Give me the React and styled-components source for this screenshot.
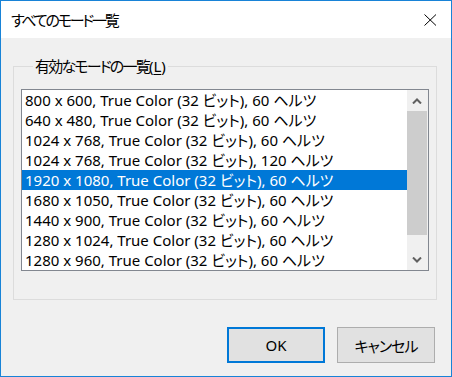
import React from "react";
import styled, { createGlobalStyle } from "styled-components";

const Global = createGlobalStyle`
  html, body { margin: 0; padding: 0; background: #f0f0f0; }
  * { box-sizing: border-box; }
`;

const FONT = `"Noto Sans", "Noto Sans CJK JP", sans-serif`;

const Window = styled.div`
  width: 452px;
  height: 377px;
  border: 1px solid #1883d7;
  display: flex;
  flex-direction: column;
  font-family: ${FONT};
  font-feature-settings: "palt";
  color: #000;
  background: #f0f0f0;
`;

const TitleBar = styled.div`
  height: 37px;
  background: #fff;
  display: flex;
  align-items: center;
  justify-content: space-between;
  padding-left: 10px;
  padding-right: 14px;
  flex-shrink: 0;
`;

const Title = styled.span`
  font-size: 15px;
  line-height: 20px;
  letter-spacing: -2.2px;
`;

const CloseIcon = styled.svg`
  display: block;
`;

const Body = styled.div`
  flex: 1;
  display: flex;
  flex-direction: column;
  padding: 18px 16px 13px 12px;
`;

const Group = styled.fieldset`
  margin: 0;
  padding: 0 0 0 7px;
  border: 1px solid #dcdcdc;
  width: 424px;
  height: 244px;
  min-width: 0;
`;

const Legend = styled.legend`
  font-size: 15px;
  line-height: 20px;
  padding: 0 2px;
  margin-left: 12px;
  color: #000;
`;

const Kana = styled.span`
  letter-spacing: -1.8px;
`;

const Under = styled.span`
  text-decoration: underline;
  text-underline-offset: 2px;
`;

const ListBox = styled.div`
  margin-top: 13px;
  width: 408px;
  height: 182px;
  border: 1px solid #828790;
  background: #fff;
  display: flex;
`;

const Rows = styled.div`
  flex: 1;
  display: flex;
  flex-direction: column;
`;

const Row = styled.div`
  height: 20px;
  line-height: 20px;
  padding-left: 3px;
  font-size: 15px;
  white-space: nowrap;
  background: ${(p) => (p.$selected ? "#0078d7" : "transparent")};
  color: ${(p) => (p.$selected ? "#fff" : "#000")};
`;

const ScrollBar = styled.div`
  width: 21px;
  background: #f0f0f0;
  display: flex;
  flex-direction: column;
`;

const ArrowButton = styled.div`
  height: 21px;
  display: flex;
  align-items: center;
  justify-content: center;
  padding-right: 1px;
`;

const Track = styled.div`
  flex: 1;
  display: flex;
  flex-direction: column;
  padding-right: 1px;
`;

const Thumb = styled.div`
  height: 124px;
  background: #cdcdcd;
`;

const Footer = styled.div`
  margin-top: 27px;
  display: flex;
  justify-content: flex-end;
  gap: 12px;
`;

const Button = styled.button`
  width: 98px;
  height: 36px;
  font-family: ${FONT};
  font-feature-settings: "palt";
  font-size: 15px;
  letter-spacing: ${(p) => (p.$default ? "0" : "-1px")};
  color: #000;
  background: #e1e1e1;
  border: ${(p) => (p.$default ? "2px solid #0078d7" : "1px solid #adadad")};
  padding: 0;
  margin: 0;
`;

const modes = [
  "800 x 600, True Color (32 ビット), 60 ヘルツ",
  "640 x 480, True Color (32 ビット), 60 ヘルツ",
  "1024 x 768, True Color (32 ビット), 60 ヘルツ",
  "1024 x 768, True Color (32 ビット), 120 ヘルツ",
  "1920 x 1080, True Color (32 ビット), 60 ヘルツ",
  "1680 x 1050, True Color (32 ビット), 60 ヘルツ",
  "1440 x 900, True Color (32 ビット), 60 ヘルツ",
  "1280 x 1024, True Color (32 ビット), 60 ヘルツ",
  "1280 x 960, True Color (32 ビット), 60 ヘルツ",
];

const Chevron = ({ up }) => (
  <svg width="10" height="6" viewBox="0 0 10 6">
    <path
      d={up ? "M1 5.5 L5 1.5 L9 5.5" : "M1 0.5 L5 4.5 L9 0.5"}
      fill="none"
      stroke="#606060"
      strokeWidth="2"
    />
  </svg>
);

export default function App() {
  return (
    <>
      <Global />
      <Window>
        <TitleBar>
          <Title>すべてのモード一覧</Title>
          <CloseIcon width="13" height="12" viewBox="0 0 13 12">
            <path d="M0.5 0.5 L12 11.5 M12 0.5 L0.5 11.5" stroke="#000" strokeWidth="1" fill="none" />
          </CloseIcon>
        </TitleBar>
        <Body>
          <Group>
            <Legend>
              <Kana>有効なモードの一覧</Kana>(<Under>L</Under>)
            </Legend>
            <ListBox>
              <Rows>
                {modes.map((m, i) => (
                  <Row key={i} $selected={i === 4}>
                    {m}
                  </Row>
                ))}
              </Rows>
              <ScrollBar>
                <ArrowButton>
                  <Chevron up />
                </ArrowButton>
                <Track>
                  <Thumb />
                </Track>
                <ArrowButton>
                  <Chevron />
                </ArrowButton>
              </ScrollBar>
            </ListBox>
          </Group>
          <Footer>
            <Button $default>OK</Button>
            <Button>キャンセル</Button>
          </Footer>
        </Body>
      </Window>
    </>
  );
}
